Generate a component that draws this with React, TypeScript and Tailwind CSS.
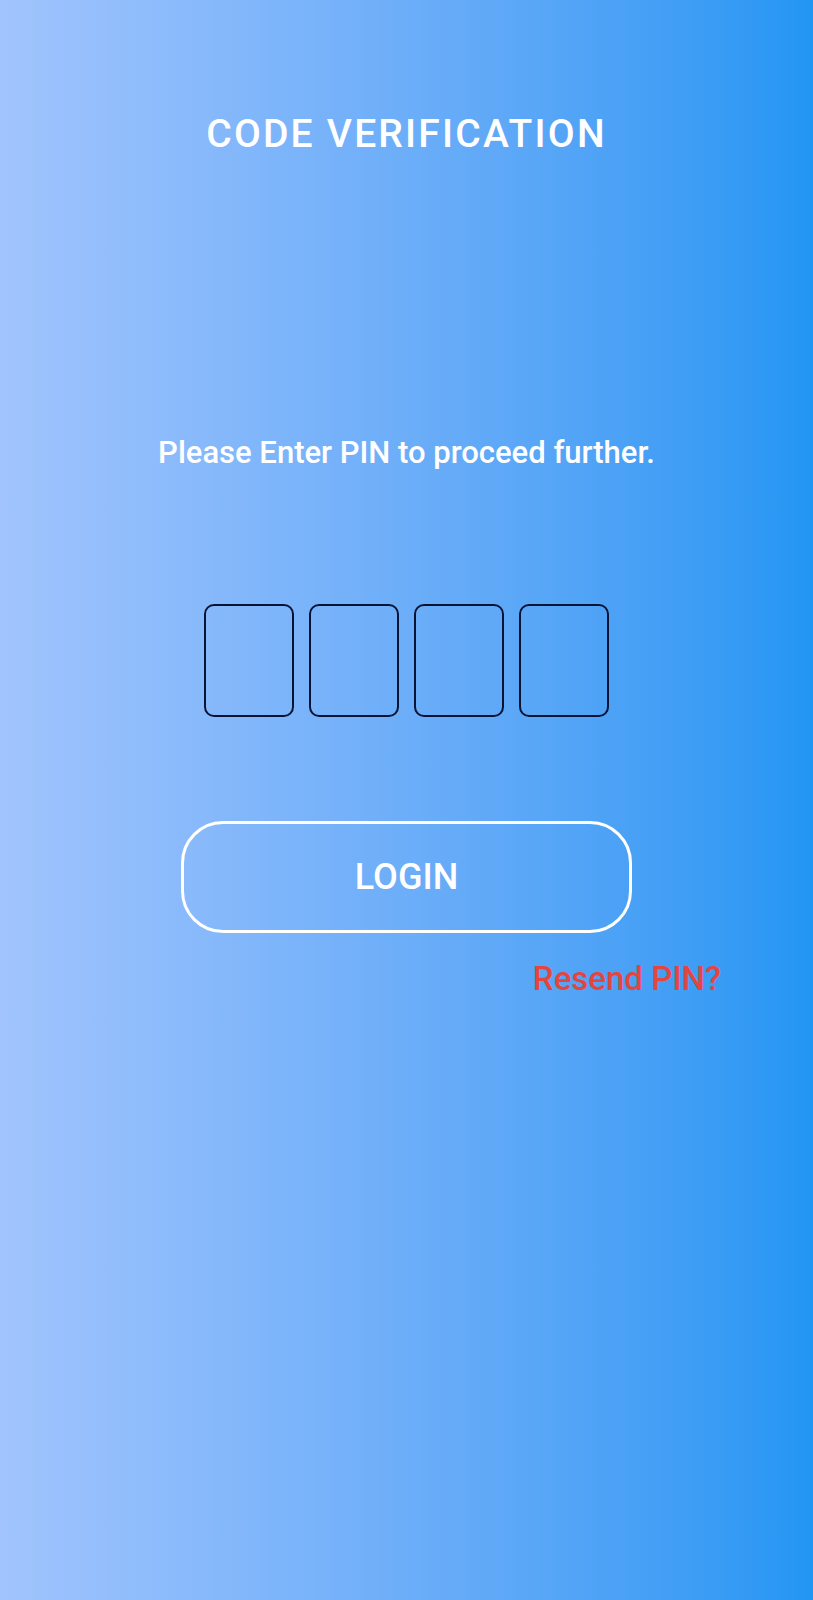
export default function App() {
  const boxes = [0, 1, 2, 3]

  return (
    <div
      className="min-h-[1600px] w-full flex flex-col items-center bg-gradient-to-r from-[#a1c4fd] to-[#2196f3] text-white font-medium"
      style={{ fontFamily: 'Roboto, "Liberation Sans", sans-serif' }}
    >
      <h1 className="mt-[115px] text-[39px] leading-none font-medium tracking-[2.2px]">CODE VERIFICATION</h1>

      <p className="mt-[283px] text-[31px] leading-none">Please Enter PIN to proceed further.</p>

      <div className="mt-[136px] flex gap-[15px]">
        {boxes.map((b) => (
          <input
            key={b}
            type="text"
            maxLength={1}
            className="w-[90px] h-[113px] rounded-[10px] border-2 border-[#081436] bg-transparent outline-none text-center text-[36px]"
          />
        ))}
      </div>

      <button className="mt-[104px] w-[451px] h-[112px] rounded-[42px] border-[3px] border-white text-[36px] leading-none font-medium">
        LOGIN
      </button>

      <div className="w-full flex justify-end pr-[92px] mt-[29px]">
        <span className="text-[33px] leading-none text-[#e2463f]">Resend PIN?</span>
      </div>
    </div>
  )
}
